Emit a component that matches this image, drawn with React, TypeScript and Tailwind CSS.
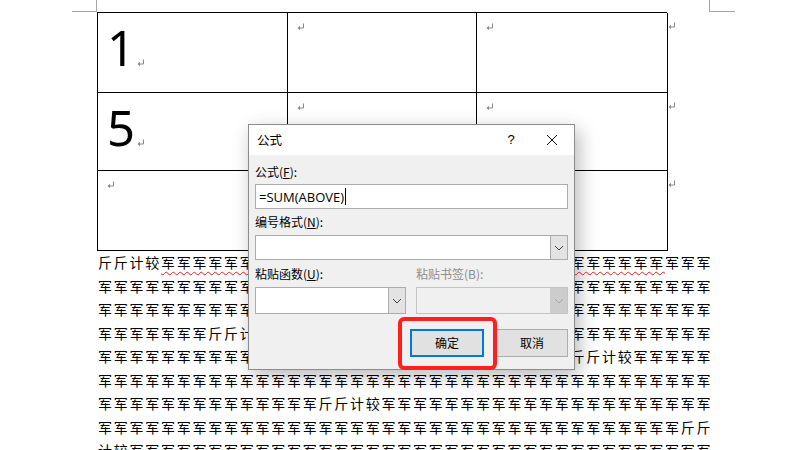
import React from "react";

const J = "军";
const rep = (n: number) => J.repeat(n);

const Mark = ({ className = "" }: { className?: string }) => (
  <svg width="8" height="8" viewBox="0 0 8 8" className={className}>
    <path d="M6.5 0.5 V5 H1.5" fill="none" stroke="#8a8a8a" strokeWidth="1" />
    <path d="M0.5 5 L3 2.8 L3 7.2 Z" fill="#8a8a8a" />
  </svg>
);

const Chevron = ({ color = "#404040" }: { color?: string }) => (
  <svg width="10" height="6" viewBox="0 0 10 6">
    <path d="M1 1 L5 5 L9 1" fill="none" stroke={color} strokeWidth="1" />
  </svg>
);

const lines: React.ReactNode[] = [
  <>
    斤斤计较
    <span className="underline decoration-wavy decoration-[#e52222] decoration-1 underline-offset-[3px]">
      {rep(32)}
    </span>
    {rep(3)}
  </>,
  rep(39),
  rep(39),
  rep(7) + "斤斤计较" + rep(28),
  rep(30) + "斤斤计较" + rep(5),
  rep(39),
  rep(14) + "斤斤计较" + rep(21),
  rep(37) + "斤斤",
  "计较" + rep(37),
];

export default function App() {
  return (
    <div
      className="relative w-[800px] h-[450px] overflow-hidden bg-white"
      style={{ fontFamily: '"Noto Sans CJK SC", "Noto Sans", sans-serif' }}
    >
      {/* page corner marks */}
      <div className="absolute left-[72px] top-0 w-[25px] h-[12px] border-r border-b border-[#a6a6a6]" />
      <div className="absolute left-[709px] top-0 w-[26px] h-[12px] border-l border-b border-[#a6a6a6]" />

      <div className="pl-[97px] pt-[12px]">
        {/* table */}
        <div className="relative w-[570px]">
          <div className="grid grid-cols-[190px_189px_191px] border-t-[1.5px] border-l-[1.5px] border-black">
            {[0, 1, 2].map((r) => (
              <React.Fragment key={r}>
                {[0, 1, 2].map((c) => (
                  <div
                    key={c}
                    className={`relative border-r-[1.5px] border-b-[1.5px] border-black ${
                      r === 1 ? "h-[78px]" : "h-[80px]"
                    }`}
                  >
                    {c === 0 && r < 2 ? (
                      <div className="flex items-end pl-[9px] pt-[10px]">
                        <span
                          className="text-[49px] leading-[49px] text-black"
                          style={{ fontFamily: '"Noto Sans", sans-serif' }}
                        >
                          {r === 0 ? "1" : "5"}
                        </span>
                        <Mark className="mb-[5px] ml-[2px]" />
                      </div>
                    ) : (
                      <div className={`${c === 0 ? "pl-[9px]" : "pl-[9px]"} pt-[10px]`}>
                        <Mark />
                      </div>
                    )}
                  </div>
                ))}
              </React.Fragment>
            ))}
          </div>
          {/* row end marks */}
          <Mark className="absolute left-[571px] top-[10px]" />
          <Mark className="absolute left-[571px] top-[90px]" />
          <Mark className="absolute left-[571px] top-[168px]" />
        </div>

        {/* body text */}
        <div className="text-[14px] leading-[23.5px] tracking-[1.75px] text-black whitespace-nowrap pl-[1px]">
          {lines.map((l, i) => (
            <div key={i}>{l}</div>
          ))}
        </div>
      </div>

      {/* dialog */}
      <div className="absolute left-[248px] top-[124px] w-[327px] h-[246px] border border-[#8c8c8c] bg-[#f0f0f0] shadow-[4px_6px_18px_rgba(0,0,0,0.28)] text-[12px] text-black flex flex-col">
        <div className="h-[30px] bg-white flex items-center pl-[8px] shrink-0">
          <span className="flex-1 text-[12.5px]">公式</span>
          <span className="w-[20px] text-center text-[13px] mr-[25px]" style={{ fontFamily: '"Liberation Sans", sans-serif' }}>?</span>
          <svg width="12" height="12" viewBox="0 0 12 12" className="mr-[16px]">
            <path d="M1 1 L11 11 M11 1 L1 11" stroke="#111" strokeWidth="1" />
          </svg>
        </div>
        <div className="flex flex-col px-[6px] pt-[9px]">
          <div className="leading-[16px]">
            公式(<span className="underline">F</span>):
          </div>
          <div className="mt-[4px] h-[25px] w-[313px] bg-white border border-[#ababab] flex items-center pl-[3px]">
            <span className="text-[13px] leading-[16px]" style={{ fontFamily: '"Open Sans", "Liberation Sans", sans-serif' }}>
              =SUM(ABOVE)
            </span>
            <span className="w-[1px] h-[17px] bg-black ml-[1px]" />
          </div>
          <div className="mt-[5px] leading-[16px]">
            编号格式(<span className="underline">N</span>):
          </div>
          <div className="mt-[5px] h-[25px] w-[313px] bg-white border border-[#ababab] flex justify-end">
            <div className="w-[17px] h-full bg-[#e3e3e3] border-l border-[#ababab] flex items-center justify-center">
              <Chevron />
            </div>
          </div>
          <div className="mt-[6px] flex gap-[10px]">
            <div className="flex flex-col w-[151px]">
              <div className="leading-[16px]">
                粘贴函数(<span className="underline">U</span>):
              </div>
              <div className="mt-[5px] h-[27px] bg-white border border-[#ababab] flex justify-end">
                <div className="w-[17px] h-full bg-[#e3e3e3] border-l border-[#ababab] flex items-center justify-center">
                  <Chevron />
                </div>
              </div>
            </div>
            <div className="flex flex-col w-[152px]">
              <div className="leading-[16px] text-[#8d8d8d]">粘贴书签(B):</div>
              <div className="mt-[5px] h-[27px] bg-[#f0f0f0] border border-[#c4c4c4] flex justify-end">
                <div className="w-[17px] h-full bg-[#cccccc] flex items-center justify-center">
                  <Chevron color="#a8a8a8" />
                </div>
              </div>
            </div>
          </div>
          <div className="mt-[15px] flex justify-end gap-[12px]">
            <div className="relative w-[74px] h-[28px] bg-[#e1e1e1] border-2 border-[#0078d7] flex items-center justify-center">
              确定
              <div className="absolute left-[-14px] top-[-14px] w-[99px] h-[53px] border-[4px] border-[#ff1f1f] rounded-[6px]" />
            </div>
            <div className="w-[72px] h-[28px] bg-[#e1e1e1] border border-[#adadad] flex items-center justify-center">
              取消
            </div>
          </div>
        </div>
      </div>
    </div>
  );
}
